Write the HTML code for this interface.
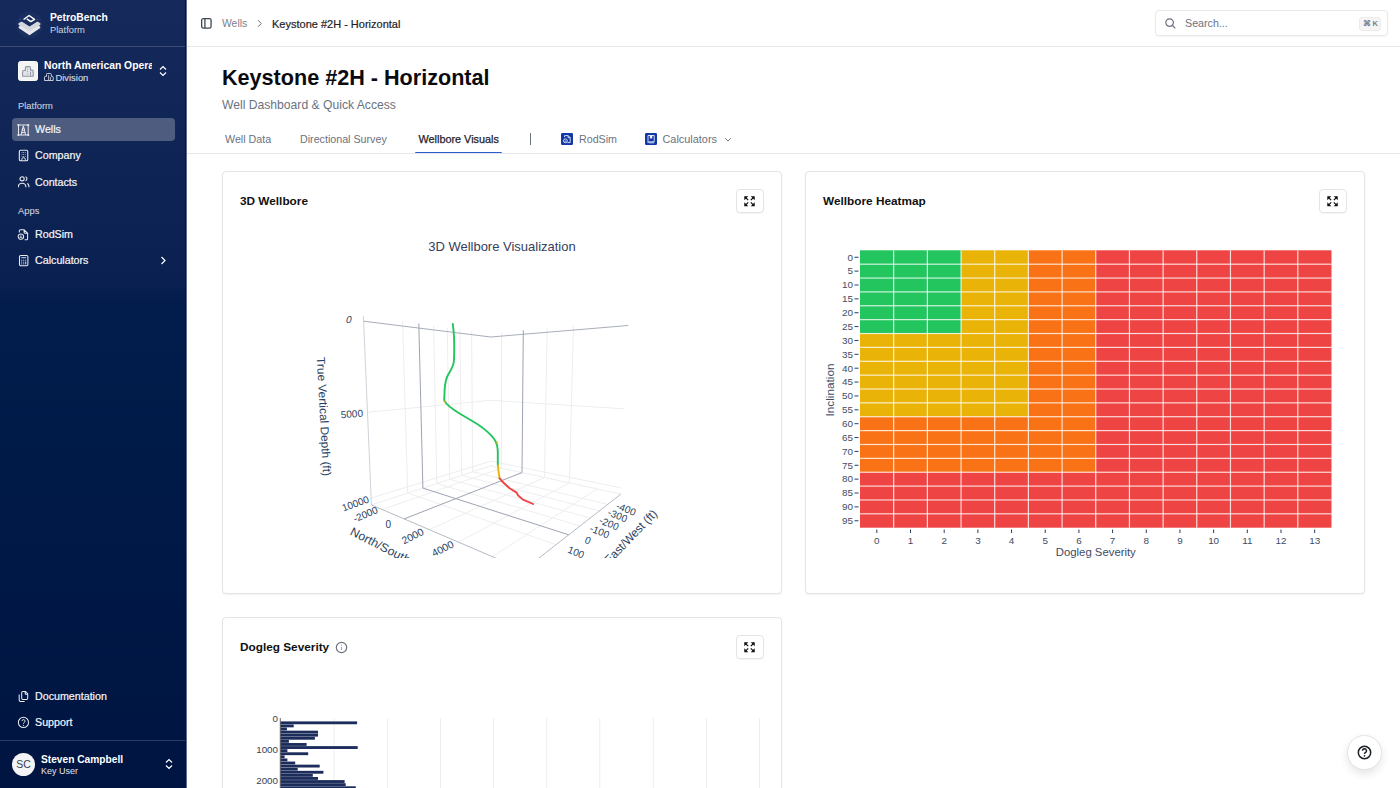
<!DOCTYPE html>
<html><head><meta charset="utf-8">
<style>
*{box-sizing:border-box;margin:0;padding:0}
html,body{width:1400px;height:788px;overflow:hidden;background:#fff;font-family:"Liberation Sans",sans-serif;color:#111827}
.abs{position:absolute}
#sb{position:absolute;left:0;top:0;width:186px;height:788px;box-shadow:1px 0 0 rgba(0,20,70,0.62);z-index:2;background:linear-gradient(180deg,#152a5b 0%,#0a2050 36%,#021c4b 38.5%,#001a48 60%,#001441 100%);border-right:1px solid #001446}
.sbt{position:absolute;color:#fff;white-space:nowrap}
.nav{position:absolute;left:12px;width:163px;height:23px;border-radius:4px}
.nav .t{position:absolute;left:23px;top:5px;font-size:10.7px;color:#f5f6f8;white-space:nowrap;-webkit-text-stroke:0.2px #f5f6f8}
.nav svg{position:absolute;left:6px;top:5px}
.lbl{position:absolute;left:18px;font-size:9.4px;color:#c9ced9;-webkit-text-stroke:0.1px #c9ced9}
#hdr{position:absolute;left:187px;top:0;width:1213px;height:47px;border-bottom:1px solid #e5e7eb}
.card{position:absolute;border:1px solid #e4e4e6;border-radius:4px;background:#fff;box-shadow:0 1px 2px rgba(0,0,0,0.06)}
.ctitle{position:absolute;left:17px;top:22px;font-size:11.8px;font-weight:bold;color:#111;white-space:nowrap}
.xbtn{position:absolute;width:28px;height:24px;border:1px solid #e4e4e6;border-radius:4px;background:#fff;box-shadow:0 1px 1px rgba(0,0,0,0.04)}
.xbtn svg{position:absolute;left:7.5px;top:5.5px}
.tab{position:absolute;top:133px;font-size:10.7px;color:#6b7280;white-space:nowrap}
svg text{font-family:"Liberation Sans",sans-serif}
</style></head>
<body>
<div id="sb">
  <svg class="abs" style="left:10px;top:5px" width="40" height="35" viewBox="10 5 40 35">
    <circle cx="29.6" cy="24.6" r="13.3" fill="#1a2f60"/>
    <path d="M18.67 23.22 L21.78 21.67 L29.56 26.78 L37.33 21.67 L40.22 23.22 L40.22 24.78 L38.89 25.67 L40.22 26.78 L40.22 28.11 L29.56 35.22 L18.67 28.11 L18.67 26.78 L20.13 25.67 L18.67 24.78 Z" fill="#e6e8ec"/>
    <path d="M18.67 23.22 L21.78 21.67 L29.56 26.78 L37.33 21.67 L40.22 23.22 L40.22 24.78 L29.56 31.2 L18.67 24.78 Z" fill="#d3d6dd"/>
    <path d="M23.6 19.5 L29.1 15.5 L34.5 19.3 L30.9 21.6 L26.8 18.9" fill="none" stroke="#fff" stroke-width="1.5" stroke-linejoin="round"/>
    <circle cx="20.4" cy="19.4" r="0.6" fill="#2b4fc9"/><circle cx="37.6" cy="19.4" r="0.6" fill="#2b4fc9"/>
  </svg>
  <div class="sbt" style="left:50px;top:12px;font-size:10.3px;font-weight:bold">PetroBench</div>
  <div class="sbt" style="left:50px;top:24px;font-size:9.4px;color:#d1d5de">Platform</div>
  <div class="abs" style="left:0;top:46px;width:185px;height:1px;background:#3b4b73"></div>
  <div class="abs" style="left:17.6px;top:60.8px;width:20.5px;height:20.5px;border-radius:2.5px;background:#f4f4f5;border:1px solid #fdfdfd"></div>
  <svg class="abs" style="left:22px;top:65.5px" width="12" height="11" viewBox="0 0 12 11"><path d="M0.6 10.2V5.6c0-.7.4-1.1 1.1-1.1h1.7V1.7c0-.7.4-1.1 1.1-1.1h2.9c.7 0 1.1.4 1.1 1.1v2.4h1.6c.7 0 1.1.4 1.1 1.1v5z" fill="#e2e4e8" stroke="#8f96a3" stroke-width="1.1" stroke-linejoin="round"/><path d="M5.6 2.7v1 M5.6 5v1 M5.6 7.3v1 M8.5 5.8v4" stroke="#8f96a3" stroke-width="0.9"/></svg>
  <div class="sbt" style="left:44px;top:59.5px;width:108px;overflow:hidden;font-size:10.35px;font-weight:bold">North American Operations</div>
  <svg class="abs" style="left:43.8px;top:73.2px" width="10" height="8" viewBox="0 0 10 8"><path d="M0.5 7.5V4.2c0-.5.3-.8.8-.8h1.2V1.3c0-.5.3-.8.8-.8h3.2c.5 0 .8.3.8.8v2.1h1.1c.5 0 .8.3.8.8v3.3z" fill="none" stroke="#d8dbe2" stroke-width="0.9"/><path d="M4.6 2.2v4.8 M6.4 4v3" stroke="#d8dbe2" stroke-width="0.8"/></svg>
  <div class="sbt" style="left:55.5px;top:71.5px;font-size:9.4px;color:#d5d9e0;-webkit-text-stroke:0.15px #d5d9e0">Division</div>
  <svg class="abs" style="left:158px;top:65px" width="10" height="12" viewBox="0 0 10 12"><path d="M2 4.5 L5 1.5 L8 4.5 M2 7.5 L5 10.5 L8 7.5" fill="none" stroke="#fff" stroke-width="1.2"/></svg>

  <div class="lbl" style="top:100px">Platform</div>
  <div class="nav" style="top:118px;background:#4d5c7f">
    <svg style="left:5px;top:5.5px" width="13" height="12" viewBox="0 0 13 12"><path d="M0.4 1H12.3 M0.4 11H12.3 M1.5 1V11 M11.2 1V11 M6.35 1.8 L4 11 M6.35 1.8 L8.7 11 M4.6 8.6H8.1" fill="none" stroke="#e8eaee" stroke-width="1"/><circle cx="6.35" cy="5.6" r="1.1" fill="none" stroke="#e8eaee" stroke-width="0.9"/><circle cx="1.5" cy="1" r="0.9" fill="#e8eaee"/><circle cx="11.2" cy="1" r="0.9" fill="#e8eaee"/><circle cx="1.5" cy="11" r="0.9" fill="#e8eaee"/><circle cx="11.2" cy="11" r="0.9" fill="#e8eaee"/></svg>
    <div class="t">Wells</div>
  </div>
  <div class="nav" style="top:144px">
    <svg width="13" height="14" viewBox="0 0 13 14"><rect x="1.35" y="1.3" width="8.4" height="10.4" rx="1.3" fill="none" stroke="#e8eaee" stroke-width="1.1"/><path d="M3.6 3.5h.8 M5.2 3.5h.8 M6.8 3.5h.8 M3.6 5.5h.8 M5.2 5.5h.8 M6.8 5.5h.8 M3.6 7.5h.8 M5.2 7.5h.8 M6.8 7.5h.8" stroke="#c9cdd6" stroke-width="0.9"/><path d="M3.8 11.6v-1.2a1.75 1.75 0 0 1 3.5 0v1.2" fill="none" stroke="#e8eaee" stroke-width="1"/></svg>
    <div class="t">Company</div>
  </div>
  <div class="nav" style="top:171px">
    <svg width="13" height="12" viewBox="0 0 13 12"><circle cx="4.1" cy="2.8" r="2.1" fill="none" stroke="#e8eaee" stroke-width="1.1"/><path d="M0.3 11.2c0-2.6 1.7-4 3.8-4s3.8 1.4 3.8 4 M7.5 0.8a2.1 2.1 0 0 1 0 4 M9.2 7.4c1.4.5 1.8 2 1.8 3.8" fill="none" stroke="#e8eaee" stroke-width="1.1"/></svg>
    <div class="t">Contacts</div>
  </div>
  <div class="lbl" style="top:205px">Apps</div>
  <div class="nav" style="top:223px">
    <svg style="left:5px;top:5px" width="13" height="13" viewBox="0 0 13 13"><path d="M2.3 4.6V2.9c0-.6.5-1.1 1.1-1.1h3.7l3.5 3.5v5.4c0 .6-.5 1.1-1.1 1.1H7.6 M7.1 1.8v2.5c0 .5.4.9.9.9h2.6" fill="none" stroke="#e8eaee" stroke-width="1.05"/><circle cx="3.9" cy="8.6" r="2.7" fill="none" stroke="#e8eaee" stroke-width="1.05"/><path d="M2.6 9.3h2.6 M3.9 7.3v2" stroke="#e8eaee" stroke-width="0.9"/></svg>
    <div class="t">RodSim</div>
  </div>
  <div class="nav" style="top:249px">
    <svg style="left:5px;top:5px" width="13" height="13" viewBox="0 0 13 13"><rect x="2.5" y="1.5" width="8.4" height="10.3" rx="1.3" fill="none" stroke="#e8eaee" stroke-width="1.05"/><path d="M4.3 3.7h4.8" stroke="#e8eaee" stroke-width="0.9"/><g fill="#dfe2e8"><rect x="4.2" y="5.7" width="1" height="1"/><rect x="6.2" y="5.7" width="1" height="1"/><rect x="8.2" y="5.7" width="1" height="1"/><rect x="4.2" y="7.6" width="1" height="1"/><rect x="6.2" y="7.6" width="1" height="1"/><rect x="4.2" y="9.4" width="1" height="1"/><rect x="6.2" y="9.4" width="1" height="1"/><rect x="8.2" y="7.6" width="1" height="2.8"/></g></svg>
    <div class="t">Calculators</div>
    <svg style="left:148px;top:7px" width="7" height="9" viewBox="0 0 7 9"><path d="M1.5 1 L5 4.5 L1.5 8" fill="none" stroke="#fff" stroke-width="1.2"/></svg>
  </div>

  <div class="nav" style="top:685px">
    <svg style="left:5px;top:5px" width="13" height="13" viewBox="0 0 13 13"><path d="M2.2 4.4v5.6c0 .8.6 1.4 1.4 1.4h4" fill="none" stroke="#e8eaee" stroke-width="1.05"/><path d="M5.9 1.5h2.6l2.2 2.2v4.5c0 .7-.5 1.2-1.2 1.2H5.9c-.7 0-1.2-.5-1.2-1.2V2.7c0-.7.5-1.2 1.2-1.2z M8.2 1.6v2.1c0 .3.2.5.5.5h2" fill="none" stroke="#e8eaee" stroke-width="1.05"/></svg>
    <div class="t">Documentation</div>
  </div>
  <div class="nav" style="top:711px">
    <svg style="left:5px;top:5px" width="13" height="13" viewBox="0 0 13 13"><circle cx="6.45" cy="6.4" r="5.1" fill="none" stroke="#e8eaee" stroke-width="1.05"/><path d="M5 5.1a1.5 1.5 0 1 1 2.1 1.4c-.4.2-.6.5-.6 1v.3" fill="none" stroke="#e8eaee" stroke-width="1"/><circle cx="6.5" cy="9.3" r=".6" fill="#e8eaee"/></svg>
    <div class="t">Support</div>
  </div>
  <div class="abs" style="left:0;top:740px;width:185px;height:1px;background:#2d3d67"></div>
  <div class="abs" style="left:12px;top:752.5px;width:23.3px;height:23.3px;border-radius:50%;background:#f3f4f6;color:#374151;font-size:10.5px;line-height:23px;text-align:center">SC</div>
  <div class="sbt" style="left:41px;top:753.5px;font-size:10.2px;font-weight:bold">Steven Campbell</div>
  <div class="sbt" style="left:41px;top:765.8px;font-size:9px;color:#e5e7eb">Key User</div>
  <svg class="abs" style="left:164px;top:758px" width="10" height="12" viewBox="0 0 10 12"><path d="M2 4.5 L5 1.5 L8 4.5 M2 7.5 L5 10.5 L8 7.5" fill="none" stroke="#fff" stroke-width="1.2"/></svg>
</div>

<div id="hdr">
  <svg class="abs" style="left:13.5px;top:18px" width="11" height="11" viewBox="0 0 11 11"><rect x="0.65" y="0.65" width="9.4" height="9.4" rx="1.6" fill="none" stroke="#3f4652" stroke-width="1.3"/><path d="M3.9 0.8v9.2" stroke="#3f4652" stroke-width="1.3"/></svg>
  <div class="abs" style="left:35px;top:18px;font-size:10.4px;color:#7c818b">Wells</div>
  <svg class="abs" style="left:70px;top:19px" width="6" height="9" viewBox="0 0 6 9"><path d="M1 1.2 L4.3 4.5 L1 7.8" fill="none" stroke="#6b7280" stroke-width="1"/></svg>
  <div class="abs" style="left:85px;top:17.5px;font-size:11px;color:#1f2229;-webkit-text-stroke:0.2px #1f2229">Keystone #2H - Horizontal</div>
  <div class="abs" style="left:968px;top:10.2px;width:232.5px;height:26.3px;border:1px solid #e8e9eb;border-radius:4px;background:#fff;box-shadow:0 1px 1px rgba(0,0,0,0.04)"></div>
  <svg class="abs" style="left:978px;top:18px" width="11" height="11" viewBox="0 0 11 11"><circle cx="4.6" cy="4.6" r="3.8" fill="none" stroke="#6b7280" stroke-width="1.2"/><path d="M7.5 7.5 L10.3 10.3" stroke="#6b7280" stroke-width="1.2"/></svg>
  <div class="abs" style="left:998px;top:17px;font-size:10.7px;color:#6b7280">Search...</div>
  <div class="abs" style="left:1172.3px;top:17.3px;width:22px;height:14px;border-radius:3px;background:#f5f5f6;border:1px solid #ececed;font-size:7.6px;font-weight:bold;color:#7a808b;line-height:12.5px;text-align:center">&#8984; K</div>
</div>

<div class="abs" style="left:222px;top:65px;font-size:21.6px;font-weight:bold;color:#0b0b0f;white-space:nowrap">Keystone #2H - Horizontal</div>
<div class="abs" style="left:222px;top:98px;font-size:12.15px;color:#6b7280;white-space:nowrap">Well Dashboard &amp; Quick Access</div>

<div class="tab" style="left:225px">Well Data</div>
<div class="tab" style="left:300px">Directional Survey</div>
<div class="tab" style="left:418.5px;font-size:10.85px;color:#1f2229;-webkit-text-stroke:0.25px #1f2229">Wellbore Visuals</div>
<div class="abs" style="left:415.3px;top:151.6px;width:87.2px;height:2px;border-radius:1px;background:#2f5bce"></div>
<div class="abs" style="left:530px;top:132.5px;width:1px;height:12.5px;background:#6b7280"></div>
<svg class="abs" style="left:561px;top:133.2px" width="12" height="12" viewBox="0 0 12 12"><rect width="12" height="12" rx="1.2" fill="#1238a8"/><path d="M3.6 4.2V2.6h3.6l2 2v5H6.4 M7.1 2.7v2h2" fill="none" stroke="#fff" stroke-width="0.8"/><circle cx="4.4" cy="7.8" r="1.9" fill="none" stroke="#fff" stroke-width="0.8"/><path d="M3.5 8.2h1.8" stroke="#fff" stroke-width="0.7"/></svg>
<div class="tab" style="left:579px">RodSim</div>
<svg class="abs" style="left:645px;top:133.2px" width="12" height="12" viewBox="0 0 12 12"><rect width="12" height="12" rx="1.2" fill="#1238a8"/><path d="M3 9.6V2.5h6.2v6.3H3.8 M3 9.6c0-.5.3-.8.8-.8 M3.8 9.8h5.4" fill="none" stroke="#fff" stroke-width="0.8"/><path d="M5.2 2.6v2.8l.9-.7.9.7V2.6" fill="#fff" stroke="#fff" stroke-width="0.5"/></svg>
<div class="tab" style="left:662.5px;font-size:10.9px">Calculators</div>
<svg class="abs" style="left:724px;top:136.5px" width="8" height="6" viewBox="0 0 8 6"><path d="M1.2 1.2 L4 4 L6.8 1.2" fill="none" stroke="#6b7280" stroke-width="1"/></svg>
<div class="abs" style="left:187px;top:153px;width:1213px;height:1px;background:#e5e7eb"></div>

<div class="card" style="left:222px;top:171px;width:560px;height:423px">
  <div class="ctitle">3D Wellbore</div>
  <div class="xbtn" style="left:512.5px;top:17px"><svg width="11" height="11" viewBox="0 0 11 11"><path d="M0.3 0.3h4L0.3 4.3Z M10.7 0.3h-4L10.7 4.3Z M0.3 10.3h4L0.3 6.3Z M10.7 10.3h-4L10.7 6.3Z" fill="#111"/><path d="M1 1l3.2 3.2 M10 1L6.8 4.2 M1 9.6l3.2-3.2 M10 9.6L6.8 6.4" stroke="#111" stroke-width="1.2"/></svg></div>
</div>
<div class="card" style="left:805px;top:171px;width:560px;height:423px">
  <div class="ctitle">Wellbore Heatmap</div>
  <div class="xbtn" style="left:512.5px;top:17px"><svg width="11" height="11" viewBox="0 0 11 11"><path d="M0.3 0.3h4L0.3 4.3Z M10.7 0.3h-4L10.7 4.3Z M0.3 10.3h4L0.3 6.3Z M10.7 10.3h-4L10.7 6.3Z" fill="#111"/><path d="M1 1l3.2 3.2 M10 1L6.8 4.2 M1 9.6l3.2-3.2 M10 9.6L6.8 6.4" stroke="#111" stroke-width="1.2"/></svg></div>
</div>
<div class="card" style="left:222px;top:617px;width:560px;height:300px">
  <div class="ctitle">Dogleg Severity</div>
  <svg class="abs" style="left:111.5px;top:22.7px" width="13" height="13" viewBox="0 0 13 13"><circle cx="6.5" cy="6.5" r="5.2" fill="none" stroke="#6b7280" stroke-width="1.2"/><path d="M6.5 6v3" stroke="#9ca3af" stroke-width="1"/><circle cx="6.5" cy="4.2" r="0.6" fill="#9ca3af"/></svg>
  <div class="xbtn" style="left:512.5px;top:17px"><svg width="11" height="11" viewBox="0 0 11 11"><path d="M0.3 0.3h4L0.3 4.3Z M10.7 0.3h-4L10.7 4.3Z M0.3 10.3h4L0.3 6.3Z M10.7 10.3h-4L10.7 6.3Z" fill="#111"/><path d="M1 1l3.2 3.2 M10 1L6.8 4.2 M1 9.6l3.2-3.2 M10 9.6L6.8 6.4" stroke="#111" stroke-width="1.2"/></svg></div>
</div>

<!-- charts overlay -->
<svg class="abs" style="left:0;top:0" width="1400" height="788" viewBox="0 0 1400 788">
  <!-- 3D -->
  <text x="428.2" y="250.6" font-size="12.9" textLength="147.5" lengthAdjust="spacingAndGlyphs" fill="#34405c">3D Wellbore Visualization</text>
  <g clip-path="url(#clip3d)">
  <g stroke="#eeeef0" stroke-width="1" fill="none"><path d="M402.6 321.3L407.7 493.0M433.6 325.5L436.8 483.5M447.3 327.4L449.7 479.3M459.9 329.1L461.6 475.4M471.6 330.7L472.7 471.8M367.5 412.3L490.8 400.3M371.1 498.1L490.9 461.1M501.7 332.3L501.4 468.2M547.1 328.1L544.5 477.5M573.5 325.7L569.4 482.9M490.8 400.3L624.5 408.9M490.9 461.1L621.1 487.9M382.3 509.5L501.4 468.2M429.3 529.6L544.5 477.5M458.4 542.1L569.4 482.9M492.5 556.7L597.1 488.9M407.7 493.0L556.0 544.7M436.8 483.5L580.0 525.9M449.7 479.3L590.2 518.0M461.6 475.4L599.4 510.9M472.7 471.8L607.7 504.4M371.4 504.9L490.9 465.9M490.9 465.9L620.9 494.1"/></g>
  <g stroke="#d0d3da" stroke-width="1" fill="none"><path d="M363.4 315.9L371.4 504.9"/></g>
  <g stroke="#b5bac5" stroke-width="1" fill="none"><path d="M371.4 504.9L523.6 570.0M523.6 570.0L620.9 494.1"/></g>
  <g stroke="#a7adb9" stroke-width="1" fill="none"><path d="M363.6 321.2L490.7 337.0L628.2 325.5"/></g>
  <g stroke="#9da3b2" stroke-width="1" fill="none"><path d="M418.8 323.5L422.9 488.1L568.7 534.8M523.3 330.3L522.0 472.6L404.2 518.9"/></g>
  <g fill="none" stroke-width="1.9" stroke-linecap="round" stroke-linejoin="round">
    <path stroke="#22c55e" d="M452.8 324 C454 332, 454.6 345, 454 360 C453.8 366, 451 370, 448.5 374 C446 378, 445 384, 444.6 390 L444.2 400.4 C446 404, 452 409, 460 413.7 L477.6 424.3 C486 430, 492 436, 494.3 439.2 C497 443, 497.8 446, 497.8 452 L497.8 465.4"/>
    <path stroke="#eab308" d="M497.8 465.4 L498.6 472 L499.6 478.3"/>
    <path stroke="#ef4444" d="M499.6 478.3 L503.3 482.5 L509.6 488.2 L516.6 492.6 L517.9 495.2 L523 499.6 L533.1 504"/>
    <circle cx="444.6" cy="401.6" r="0.9" fill="#eab308" stroke="none"/>
    <circle cx="497" cy="442.5" r="0.9" fill="#eab308" stroke="none"/>
  </g>
  <g fill="#2a3f5f" font-size="10">
    <text transform="translate(345.5 322.8) skewX(-12)">0</text>
    <text transform="translate(341 418.2) rotate(-4)">5000</text>
    <text transform="translate(343.5 511.5) rotate(-20)">10000</text>
    <text transform="translate(355 522.5) rotate(-23)">-2000</text>
    <text transform="translate(385.5 527.5)">0</text>
    <text transform="translate(404 544.5) rotate(-27)" font-size="10.4">2000</text>
    <text transform="translate(434 557) rotate(-27)" font-size="10.4">4000</text>
    <text transform="translate(567 552.3) rotate(22)">100</text>
    <text transform="translate(584 542.5) rotate(22)">0</text>
    <text transform="translate(589 531) rotate(22)">-100</text>
    <text transform="translate(598.5 523) rotate(22)">-200</text>
    <text transform="translate(607 515) rotate(22)">-300</text>
    <text transform="translate(615.5 508.5) rotate(22)">-400</text>
    <text font-size="11.6" textLength="119" lengthAdjust="spacingAndGlyphs" transform="translate(316.8 357.3) rotate(87)">True Vertical Depth (ft)</text>
    <text font-size="12" textLength="84" lengthAdjust="spacingAndGlyphs" transform="translate(349.3 534.3) rotate(27)">North/South (ft)</text>
    <text font-size="12" textLength="70" lengthAdjust="spacingAndGlyphs" transform="translate(609.3 564.8) rotate(-46)">East/West (ft)</text>
  </g>
  </g>
  <clipPath id="clip3d"><rect x="223" y="220" width="558" height="338"/></clipPath>

  <!-- heatmap -->
  <g font-size="9.9" fill="#3f4b63">
<rect x="860.00" y="250.30" width="33.68" height="13.87" fill="#22c55e"/>
<rect x="860.00" y="264.17" width="33.68" height="13.87" fill="#22c55e"/>
<rect x="860.00" y="278.04" width="33.68" height="13.87" fill="#22c55e"/>
<rect x="860.00" y="291.91" width="33.68" height="13.87" fill="#22c55e"/>
<rect x="860.00" y="305.78" width="33.68" height="13.87" fill="#22c55e"/>
<rect x="860.00" y="319.65" width="33.68" height="13.87" fill="#22c55e"/>
<rect x="860.00" y="333.52" width="33.68" height="13.87" fill="#eab308"/>
<rect x="860.00" y="347.39" width="33.68" height="13.87" fill="#eab308"/>
<rect x="860.00" y="361.26" width="33.68" height="13.87" fill="#eab308"/>
<rect x="860.00" y="375.13" width="33.68" height="13.87" fill="#eab308"/>
<rect x="860.00" y="389.00" width="33.68" height="13.87" fill="#eab308"/>
<rect x="860.00" y="402.87" width="33.68" height="13.87" fill="#eab308"/>
<rect x="860.00" y="416.74" width="33.68" height="13.87" fill="#f97316"/>
<rect x="860.00" y="430.61" width="33.68" height="13.87" fill="#f97316"/>
<rect x="860.00" y="444.48" width="33.68" height="13.87" fill="#f97316"/>
<rect x="860.00" y="458.35" width="33.68" height="13.87" fill="#f97316"/>
<rect x="860.00" y="472.22" width="33.68" height="13.87" fill="#ef4444"/>
<rect x="860.00" y="486.09" width="33.68" height="13.87" fill="#ef4444"/>
<rect x="860.00" y="499.96" width="33.68" height="13.87" fill="#ef4444"/>
<rect x="860.00" y="513.83" width="33.68" height="13.87" fill="#ef4444"/>
<rect x="893.68" y="250.30" width="33.68" height="13.87" fill="#22c55e"/>
<rect x="893.68" y="264.17" width="33.68" height="13.87" fill="#22c55e"/>
<rect x="893.68" y="278.04" width="33.68" height="13.87" fill="#22c55e"/>
<rect x="893.68" y="291.91" width="33.68" height="13.87" fill="#22c55e"/>
<rect x="893.68" y="305.78" width="33.68" height="13.87" fill="#22c55e"/>
<rect x="893.68" y="319.65" width="33.68" height="13.87" fill="#22c55e"/>
<rect x="893.68" y="333.52" width="33.68" height="13.87" fill="#eab308"/>
<rect x="893.68" y="347.39" width="33.68" height="13.87" fill="#eab308"/>
<rect x="893.68" y="361.26" width="33.68" height="13.87" fill="#eab308"/>
<rect x="893.68" y="375.13" width="33.68" height="13.87" fill="#eab308"/>
<rect x="893.68" y="389.00" width="33.68" height="13.87" fill="#eab308"/>
<rect x="893.68" y="402.87" width="33.68" height="13.87" fill="#eab308"/>
<rect x="893.68" y="416.74" width="33.68" height="13.87" fill="#f97316"/>
<rect x="893.68" y="430.61" width="33.68" height="13.87" fill="#f97316"/>
<rect x="893.68" y="444.48" width="33.68" height="13.87" fill="#f97316"/>
<rect x="893.68" y="458.35" width="33.68" height="13.87" fill="#f97316"/>
<rect x="893.68" y="472.22" width="33.68" height="13.87" fill="#ef4444"/>
<rect x="893.68" y="486.09" width="33.68" height="13.87" fill="#ef4444"/>
<rect x="893.68" y="499.96" width="33.68" height="13.87" fill="#ef4444"/>
<rect x="893.68" y="513.83" width="33.68" height="13.87" fill="#ef4444"/>
<rect x="927.36" y="250.30" width="33.68" height="13.87" fill="#22c55e"/>
<rect x="927.36" y="264.17" width="33.68" height="13.87" fill="#22c55e"/>
<rect x="927.36" y="278.04" width="33.68" height="13.87" fill="#22c55e"/>
<rect x="927.36" y="291.91" width="33.68" height="13.87" fill="#22c55e"/>
<rect x="927.36" y="305.78" width="33.68" height="13.87" fill="#22c55e"/>
<rect x="927.36" y="319.65" width="33.68" height="13.87" fill="#22c55e"/>
<rect x="927.36" y="333.52" width="33.68" height="13.87" fill="#eab308"/>
<rect x="927.36" y="347.39" width="33.68" height="13.87" fill="#eab308"/>
<rect x="927.36" y="361.26" width="33.68" height="13.87" fill="#eab308"/>
<rect x="927.36" y="375.13" width="33.68" height="13.87" fill="#eab308"/>
<rect x="927.36" y="389.00" width="33.68" height="13.87" fill="#eab308"/>
<rect x="927.36" y="402.87" width="33.68" height="13.87" fill="#eab308"/>
<rect x="927.36" y="416.74" width="33.68" height="13.87" fill="#f97316"/>
<rect x="927.36" y="430.61" width="33.68" height="13.87" fill="#f97316"/>
<rect x="927.36" y="444.48" width="33.68" height="13.87" fill="#f97316"/>
<rect x="927.36" y="458.35" width="33.68" height="13.87" fill="#f97316"/>
<rect x="927.36" y="472.22" width="33.68" height="13.87" fill="#ef4444"/>
<rect x="927.36" y="486.09" width="33.68" height="13.87" fill="#ef4444"/>
<rect x="927.36" y="499.96" width="33.68" height="13.87" fill="#ef4444"/>
<rect x="927.36" y="513.83" width="33.68" height="13.87" fill="#ef4444"/>
<rect x="961.04" y="250.30" width="33.68" height="13.87" fill="#eab308"/>
<rect x="961.04" y="264.17" width="33.68" height="13.87" fill="#eab308"/>
<rect x="961.04" y="278.04" width="33.68" height="13.87" fill="#eab308"/>
<rect x="961.04" y="291.91" width="33.68" height="13.87" fill="#eab308"/>
<rect x="961.04" y="305.78" width="33.68" height="13.87" fill="#eab308"/>
<rect x="961.04" y="319.65" width="33.68" height="13.87" fill="#eab308"/>
<rect x="961.04" y="333.52" width="33.68" height="13.87" fill="#eab308"/>
<rect x="961.04" y="347.39" width="33.68" height="13.87" fill="#eab308"/>
<rect x="961.04" y="361.26" width="33.68" height="13.87" fill="#eab308"/>
<rect x="961.04" y="375.13" width="33.68" height="13.87" fill="#eab308"/>
<rect x="961.04" y="389.00" width="33.68" height="13.87" fill="#eab308"/>
<rect x="961.04" y="402.87" width="33.68" height="13.87" fill="#eab308"/>
<rect x="961.04" y="416.74" width="33.68" height="13.87" fill="#f97316"/>
<rect x="961.04" y="430.61" width="33.68" height="13.87" fill="#f97316"/>
<rect x="961.04" y="444.48" width="33.68" height="13.87" fill="#f97316"/>
<rect x="961.04" y="458.35" width="33.68" height="13.87" fill="#f97316"/>
<rect x="961.04" y="472.22" width="33.68" height="13.87" fill="#ef4444"/>
<rect x="961.04" y="486.09" width="33.68" height="13.87" fill="#ef4444"/>
<rect x="961.04" y="499.96" width="33.68" height="13.87" fill="#ef4444"/>
<rect x="961.04" y="513.83" width="33.68" height="13.87" fill="#ef4444"/>
<rect x="994.71" y="250.30" width="33.68" height="13.87" fill="#eab308"/>
<rect x="994.71" y="264.17" width="33.68" height="13.87" fill="#eab308"/>
<rect x="994.71" y="278.04" width="33.68" height="13.87" fill="#eab308"/>
<rect x="994.71" y="291.91" width="33.68" height="13.87" fill="#eab308"/>
<rect x="994.71" y="305.78" width="33.68" height="13.87" fill="#eab308"/>
<rect x="994.71" y="319.65" width="33.68" height="13.87" fill="#eab308"/>
<rect x="994.71" y="333.52" width="33.68" height="13.87" fill="#eab308"/>
<rect x="994.71" y="347.39" width="33.68" height="13.87" fill="#eab308"/>
<rect x="994.71" y="361.26" width="33.68" height="13.87" fill="#eab308"/>
<rect x="994.71" y="375.13" width="33.68" height="13.87" fill="#eab308"/>
<rect x="994.71" y="389.00" width="33.68" height="13.87" fill="#eab308"/>
<rect x="994.71" y="402.87" width="33.68" height="13.87" fill="#eab308"/>
<rect x="994.71" y="416.74" width="33.68" height="13.87" fill="#f97316"/>
<rect x="994.71" y="430.61" width="33.68" height="13.87" fill="#f97316"/>
<rect x="994.71" y="444.48" width="33.68" height="13.87" fill="#f97316"/>
<rect x="994.71" y="458.35" width="33.68" height="13.87" fill="#f97316"/>
<rect x="994.71" y="472.22" width="33.68" height="13.87" fill="#ef4444"/>
<rect x="994.71" y="486.09" width="33.68" height="13.87" fill="#ef4444"/>
<rect x="994.71" y="499.96" width="33.68" height="13.87" fill="#ef4444"/>
<rect x="994.71" y="513.83" width="33.68" height="13.87" fill="#ef4444"/>
<rect x="1028.39" y="250.30" width="33.68" height="13.87" fill="#f97316"/>
<rect x="1028.39" y="264.17" width="33.68" height="13.87" fill="#f97316"/>
<rect x="1028.39" y="278.04" width="33.68" height="13.87" fill="#f97316"/>
<rect x="1028.39" y="291.91" width="33.68" height="13.87" fill="#f97316"/>
<rect x="1028.39" y="305.78" width="33.68" height="13.87" fill="#f97316"/>
<rect x="1028.39" y="319.65" width="33.68" height="13.87" fill="#f97316"/>
<rect x="1028.39" y="333.52" width="33.68" height="13.87" fill="#f97316"/>
<rect x="1028.39" y="347.39" width="33.68" height="13.87" fill="#f97316"/>
<rect x="1028.39" y="361.26" width="33.68" height="13.87" fill="#f97316"/>
<rect x="1028.39" y="375.13" width="33.68" height="13.87" fill="#f97316"/>
<rect x="1028.39" y="389.00" width="33.68" height="13.87" fill="#f97316"/>
<rect x="1028.39" y="402.87" width="33.68" height="13.87" fill="#f97316"/>
<rect x="1028.39" y="416.74" width="33.68" height="13.87" fill="#f97316"/>
<rect x="1028.39" y="430.61" width="33.68" height="13.87" fill="#f97316"/>
<rect x="1028.39" y="444.48" width="33.68" height="13.87" fill="#f97316"/>
<rect x="1028.39" y="458.35" width="33.68" height="13.87" fill="#f97316"/>
<rect x="1028.39" y="472.22" width="33.68" height="13.87" fill="#ef4444"/>
<rect x="1028.39" y="486.09" width="33.68" height="13.87" fill="#ef4444"/>
<rect x="1028.39" y="499.96" width="33.68" height="13.87" fill="#ef4444"/>
<rect x="1028.39" y="513.83" width="33.68" height="13.87" fill="#ef4444"/>
<rect x="1062.07" y="250.30" width="33.68" height="13.87" fill="#f97316"/>
<rect x="1062.07" y="264.17" width="33.68" height="13.87" fill="#f97316"/>
<rect x="1062.07" y="278.04" width="33.68" height="13.87" fill="#f97316"/>
<rect x="1062.07" y="291.91" width="33.68" height="13.87" fill="#f97316"/>
<rect x="1062.07" y="305.78" width="33.68" height="13.87" fill="#f97316"/>
<rect x="1062.07" y="319.65" width="33.68" height="13.87" fill="#f97316"/>
<rect x="1062.07" y="333.52" width="33.68" height="13.87" fill="#f97316"/>
<rect x="1062.07" y="347.39" width="33.68" height="13.87" fill="#f97316"/>
<rect x="1062.07" y="361.26" width="33.68" height="13.87" fill="#f97316"/>
<rect x="1062.07" y="375.13" width="33.68" height="13.87" fill="#f97316"/>
<rect x="1062.07" y="389.00" width="33.68" height="13.87" fill="#f97316"/>
<rect x="1062.07" y="402.87" width="33.68" height="13.87" fill="#f97316"/>
<rect x="1062.07" y="416.74" width="33.68" height="13.87" fill="#f97316"/>
<rect x="1062.07" y="430.61" width="33.68" height="13.87" fill="#f97316"/>
<rect x="1062.07" y="444.48" width="33.68" height="13.87" fill="#f97316"/>
<rect x="1062.07" y="458.35" width="33.68" height="13.87" fill="#f97316"/>
<rect x="1062.07" y="472.22" width="33.68" height="13.87" fill="#ef4444"/>
<rect x="1062.07" y="486.09" width="33.68" height="13.87" fill="#ef4444"/>
<rect x="1062.07" y="499.96" width="33.68" height="13.87" fill="#ef4444"/>
<rect x="1062.07" y="513.83" width="33.68" height="13.87" fill="#ef4444"/>
<rect x="1095.75" y="250.30" width="33.68" height="13.87" fill="#ef4444"/>
<rect x="1095.75" y="264.17" width="33.68" height="13.87" fill="#ef4444"/>
<rect x="1095.75" y="278.04" width="33.68" height="13.87" fill="#ef4444"/>
<rect x="1095.75" y="291.91" width="33.68" height="13.87" fill="#ef4444"/>
<rect x="1095.75" y="305.78" width="33.68" height="13.87" fill="#ef4444"/>
<rect x="1095.75" y="319.65" width="33.68" height="13.87" fill="#ef4444"/>
<rect x="1095.75" y="333.52" width="33.68" height="13.87" fill="#ef4444"/>
<rect x="1095.75" y="347.39" width="33.68" height="13.87" fill="#ef4444"/>
<rect x="1095.75" y="361.26" width="33.68" height="13.87" fill="#ef4444"/>
<rect x="1095.75" y="375.13" width="33.68" height="13.87" fill="#ef4444"/>
<rect x="1095.75" y="389.00" width="33.68" height="13.87" fill="#ef4444"/>
<rect x="1095.75" y="402.87" width="33.68" height="13.87" fill="#ef4444"/>
<rect x="1095.75" y="416.74" width="33.68" height="13.87" fill="#ef4444"/>
<rect x="1095.75" y="430.61" width="33.68" height="13.87" fill="#ef4444"/>
<rect x="1095.75" y="444.48" width="33.68" height="13.87" fill="#ef4444"/>
<rect x="1095.75" y="458.35" width="33.68" height="13.87" fill="#ef4444"/>
<rect x="1095.75" y="472.22" width="33.68" height="13.87" fill="#ef4444"/>
<rect x="1095.75" y="486.09" width="33.68" height="13.87" fill="#ef4444"/>
<rect x="1095.75" y="499.96" width="33.68" height="13.87" fill="#ef4444"/>
<rect x="1095.75" y="513.83" width="33.68" height="13.87" fill="#ef4444"/>
<rect x="1129.43" y="250.30" width="33.68" height="13.87" fill="#ef4444"/>
<rect x="1129.43" y="264.17" width="33.68" height="13.87" fill="#ef4444"/>
<rect x="1129.43" y="278.04" width="33.68" height="13.87" fill="#ef4444"/>
<rect x="1129.43" y="291.91" width="33.68" height="13.87" fill="#ef4444"/>
<rect x="1129.43" y="305.78" width="33.68" height="13.87" fill="#ef4444"/>
<rect x="1129.43" y="319.65" width="33.68" height="13.87" fill="#ef4444"/>
<rect x="1129.43" y="333.52" width="33.68" height="13.87" fill="#ef4444"/>
<rect x="1129.43" y="347.39" width="33.68" height="13.87" fill="#ef4444"/>
<rect x="1129.43" y="361.26" width="33.68" height="13.87" fill="#ef4444"/>
<rect x="1129.43" y="375.13" width="33.68" height="13.87" fill="#ef4444"/>
<rect x="1129.43" y="389.00" width="33.68" height="13.87" fill="#ef4444"/>
<rect x="1129.43" y="402.87" width="33.68" height="13.87" fill="#ef4444"/>
<rect x="1129.43" y="416.74" width="33.68" height="13.87" fill="#ef4444"/>
<rect x="1129.43" y="430.61" width="33.68" height="13.87" fill="#ef4444"/>
<rect x="1129.43" y="444.48" width="33.68" height="13.87" fill="#ef4444"/>
<rect x="1129.43" y="458.35" width="33.68" height="13.87" fill="#ef4444"/>
<rect x="1129.43" y="472.22" width="33.68" height="13.87" fill="#ef4444"/>
<rect x="1129.43" y="486.09" width="33.68" height="13.87" fill="#ef4444"/>
<rect x="1129.43" y="499.96" width="33.68" height="13.87" fill="#ef4444"/>
<rect x="1129.43" y="513.83" width="33.68" height="13.87" fill="#ef4444"/>
<rect x="1163.11" y="250.30" width="33.68" height="13.87" fill="#ef4444"/>
<rect x="1163.11" y="264.17" width="33.68" height="13.87" fill="#ef4444"/>
<rect x="1163.11" y="278.04" width="33.68" height="13.87" fill="#ef4444"/>
<rect x="1163.11" y="291.91" width="33.68" height="13.87" fill="#ef4444"/>
<rect x="1163.11" y="305.78" width="33.68" height="13.87" fill="#ef4444"/>
<rect x="1163.11" y="319.65" width="33.68" height="13.87" fill="#ef4444"/>
<rect x="1163.11" y="333.52" width="33.68" height="13.87" fill="#ef4444"/>
<rect x="1163.11" y="347.39" width="33.68" height="13.87" fill="#ef4444"/>
<rect x="1163.11" y="361.26" width="33.68" height="13.87" fill="#ef4444"/>
<rect x="1163.11" y="375.13" width="33.68" height="13.87" fill="#ef4444"/>
<rect x="1163.11" y="389.00" width="33.68" height="13.87" fill="#ef4444"/>
<rect x="1163.11" y="402.87" width="33.68" height="13.87" fill="#ef4444"/>
<rect x="1163.11" y="416.74" width="33.68" height="13.87" fill="#ef4444"/>
<rect x="1163.11" y="430.61" width="33.68" height="13.87" fill="#ef4444"/>
<rect x="1163.11" y="444.48" width="33.68" height="13.87" fill="#ef4444"/>
<rect x="1163.11" y="458.35" width="33.68" height="13.87" fill="#ef4444"/>
<rect x="1163.11" y="472.22" width="33.68" height="13.87" fill="#ef4444"/>
<rect x="1163.11" y="486.09" width="33.68" height="13.87" fill="#ef4444"/>
<rect x="1163.11" y="499.96" width="33.68" height="13.87" fill="#ef4444"/>
<rect x="1163.11" y="513.83" width="33.68" height="13.87" fill="#ef4444"/>
<rect x="1196.79" y="250.30" width="33.68" height="13.87" fill="#ef4444"/>
<rect x="1196.79" y="264.17" width="33.68" height="13.87" fill="#ef4444"/>
<rect x="1196.79" y="278.04" width="33.68" height="13.87" fill="#ef4444"/>
<rect x="1196.79" y="291.91" width="33.68" height="13.87" fill="#ef4444"/>
<rect x="1196.79" y="305.78" width="33.68" height="13.87" fill="#ef4444"/>
<rect x="1196.79" y="319.65" width="33.68" height="13.87" fill="#ef4444"/>
<rect x="1196.79" y="333.52" width="33.68" height="13.87" fill="#ef4444"/>
<rect x="1196.79" y="347.39" width="33.68" height="13.87" fill="#ef4444"/>
<rect x="1196.79" y="361.26" width="33.68" height="13.87" fill="#ef4444"/>
<rect x="1196.79" y="375.13" width="33.68" height="13.87" fill="#ef4444"/>
<rect x="1196.79" y="389.00" width="33.68" height="13.87" fill="#ef4444"/>
<rect x="1196.79" y="402.87" width="33.68" height="13.87" fill="#ef4444"/>
<rect x="1196.79" y="416.74" width="33.68" height="13.87" fill="#ef4444"/>
<rect x="1196.79" y="430.61" width="33.68" height="13.87" fill="#ef4444"/>
<rect x="1196.79" y="444.48" width="33.68" height="13.87" fill="#ef4444"/>
<rect x="1196.79" y="458.35" width="33.68" height="13.87" fill="#ef4444"/>
<rect x="1196.79" y="472.22" width="33.68" height="13.87" fill="#ef4444"/>
<rect x="1196.79" y="486.09" width="33.68" height="13.87" fill="#ef4444"/>
<rect x="1196.79" y="499.96" width="33.68" height="13.87" fill="#ef4444"/>
<rect x="1196.79" y="513.83" width="33.68" height="13.87" fill="#ef4444"/>
<rect x="1230.46" y="250.30" width="33.68" height="13.87" fill="#ef4444"/>
<rect x="1230.46" y="264.17" width="33.68" height="13.87" fill="#ef4444"/>
<rect x="1230.46" y="278.04" width="33.68" height="13.87" fill="#ef4444"/>
<rect x="1230.46" y="291.91" width="33.68" height="13.87" fill="#ef4444"/>
<rect x="1230.46" y="305.78" width="33.68" height="13.87" fill="#ef4444"/>
<rect x="1230.46" y="319.65" width="33.68" height="13.87" fill="#ef4444"/>
<rect x="1230.46" y="333.52" width="33.68" height="13.87" fill="#ef4444"/>
<rect x="1230.46" y="347.39" width="33.68" height="13.87" fill="#ef4444"/>
<rect x="1230.46" y="361.26" width="33.68" height="13.87" fill="#ef4444"/>
<rect x="1230.46" y="375.13" width="33.68" height="13.87" fill="#ef4444"/>
<rect x="1230.46" y="389.00" width="33.68" height="13.87" fill="#ef4444"/>
<rect x="1230.46" y="402.87" width="33.68" height="13.87" fill="#ef4444"/>
<rect x="1230.46" y="416.74" width="33.68" height="13.87" fill="#ef4444"/>
<rect x="1230.46" y="430.61" width="33.68" height="13.87" fill="#ef4444"/>
<rect x="1230.46" y="444.48" width="33.68" height="13.87" fill="#ef4444"/>
<rect x="1230.46" y="458.35" width="33.68" height="13.87" fill="#ef4444"/>
<rect x="1230.46" y="472.22" width="33.68" height="13.87" fill="#ef4444"/>
<rect x="1230.46" y="486.09" width="33.68" height="13.87" fill="#ef4444"/>
<rect x="1230.46" y="499.96" width="33.68" height="13.87" fill="#ef4444"/>
<rect x="1230.46" y="513.83" width="33.68" height="13.87" fill="#ef4444"/>
<rect x="1264.14" y="250.30" width="33.68" height="13.87" fill="#ef4444"/>
<rect x="1264.14" y="264.17" width="33.68" height="13.87" fill="#ef4444"/>
<rect x="1264.14" y="278.04" width="33.68" height="13.87" fill="#ef4444"/>
<rect x="1264.14" y="291.91" width="33.68" height="13.87" fill="#ef4444"/>
<rect x="1264.14" y="305.78" width="33.68" height="13.87" fill="#ef4444"/>
<rect x="1264.14" y="319.65" width="33.68" height="13.87" fill="#ef4444"/>
<rect x="1264.14" y="333.52" width="33.68" height="13.87" fill="#ef4444"/>
<rect x="1264.14" y="347.39" width="33.68" height="13.87" fill="#ef4444"/>
<rect x="1264.14" y="361.26" width="33.68" height="13.87" fill="#ef4444"/>
<rect x="1264.14" y="375.13" width="33.68" height="13.87" fill="#ef4444"/>
<rect x="1264.14" y="389.00" width="33.68" height="13.87" fill="#ef4444"/>
<rect x="1264.14" y="402.87" width="33.68" height="13.87" fill="#ef4444"/>
<rect x="1264.14" y="416.74" width="33.68" height="13.87" fill="#ef4444"/>
<rect x="1264.14" y="430.61" width="33.68" height="13.87" fill="#ef4444"/>
<rect x="1264.14" y="444.48" width="33.68" height="13.87" fill="#ef4444"/>
<rect x="1264.14" y="458.35" width="33.68" height="13.87" fill="#ef4444"/>
<rect x="1264.14" y="472.22" width="33.68" height="13.87" fill="#ef4444"/>
<rect x="1264.14" y="486.09" width="33.68" height="13.87" fill="#ef4444"/>
<rect x="1264.14" y="499.96" width="33.68" height="13.87" fill="#ef4444"/>
<rect x="1264.14" y="513.83" width="33.68" height="13.87" fill="#ef4444"/>
<rect x="1297.82" y="250.30" width="33.68" height="13.87" fill="#ef4444"/>
<rect x="1297.82" y="264.17" width="33.68" height="13.87" fill="#ef4444"/>
<rect x="1297.82" y="278.04" width="33.68" height="13.87" fill="#ef4444"/>
<rect x="1297.82" y="291.91" width="33.68" height="13.87" fill="#ef4444"/>
<rect x="1297.82" y="305.78" width="33.68" height="13.87" fill="#ef4444"/>
<rect x="1297.82" y="319.65" width="33.68" height="13.87" fill="#ef4444"/>
<rect x="1297.82" y="333.52" width="33.68" height="13.87" fill="#ef4444"/>
<rect x="1297.82" y="347.39" width="33.68" height="13.87" fill="#ef4444"/>
<rect x="1297.82" y="361.26" width="33.68" height="13.87" fill="#ef4444"/>
<rect x="1297.82" y="375.13" width="33.68" height="13.87" fill="#ef4444"/>
<rect x="1297.82" y="389.00" width="33.68" height="13.87" fill="#ef4444"/>
<rect x="1297.82" y="402.87" width="33.68" height="13.87" fill="#ef4444"/>
<rect x="1297.82" y="416.74" width="33.68" height="13.87" fill="#ef4444"/>
<rect x="1297.82" y="430.61" width="33.68" height="13.87" fill="#ef4444"/>
<rect x="1297.82" y="444.48" width="33.68" height="13.87" fill="#ef4444"/>
<rect x="1297.82" y="458.35" width="33.68" height="13.87" fill="#ef4444"/>
<rect x="1297.82" y="472.22" width="33.68" height="13.87" fill="#ef4444"/>
<rect x="1297.82" y="486.09" width="33.68" height="13.87" fill="#ef4444"/>
<rect x="1297.82" y="499.96" width="33.68" height="13.87" fill="#ef4444"/>
<rect x="1297.82" y="513.83" width="33.68" height="13.87" fill="#ef4444"/>
<rect x="893.08" y="250.30" width="1.2" height="277.40" fill="#fff" fill-opacity="0.75"/>
<rect x="926.76" y="250.30" width="1.2" height="277.40" fill="#fff" fill-opacity="0.75"/>
<rect x="960.44" y="250.30" width="1.2" height="277.40" fill="#fff" fill-opacity="0.75"/>
<rect x="994.11" y="250.30" width="1.2" height="277.40" fill="#fff" fill-opacity="0.75"/>
<rect x="1027.79" y="250.30" width="1.2" height="277.40" fill="#fff" fill-opacity="0.75"/>
<rect x="1061.47" y="250.30" width="1.2" height="277.40" fill="#fff" fill-opacity="0.75"/>
<rect x="1095.15" y="250.30" width="1.2" height="277.40" fill="#fff" fill-opacity="0.75"/>
<rect x="1128.83" y="250.30" width="1.2" height="277.40" fill="#fff" fill-opacity="0.75"/>
<rect x="1162.51" y="250.30" width="1.2" height="277.40" fill="#fff" fill-opacity="0.75"/>
<rect x="1196.19" y="250.30" width="1.2" height="277.40" fill="#fff" fill-opacity="0.75"/>
<rect x="1229.86" y="250.30" width="1.2" height="277.40" fill="#fff" fill-opacity="0.75"/>
<rect x="1263.54" y="250.30" width="1.2" height="277.40" fill="#fff" fill-opacity="0.75"/>
<rect x="1297.22" y="250.30" width="1.2" height="277.40" fill="#fff" fill-opacity="0.75"/>
<rect x="860.00" y="263.57" width="471.50" height="1.2" fill="#fff" fill-opacity="0.75"/>
<rect x="860.00" y="277.44" width="471.50" height="1.2" fill="#fff" fill-opacity="0.75"/>
<rect x="860.00" y="291.31" width="471.50" height="1.2" fill="#fff" fill-opacity="0.75"/>
<rect x="860.00" y="305.18" width="471.50" height="1.2" fill="#fff" fill-opacity="0.75"/>
<rect x="860.00" y="319.05" width="471.50" height="1.2" fill="#fff" fill-opacity="0.75"/>
<rect x="860.00" y="332.92" width="471.50" height="1.2" fill="#fff" fill-opacity="0.75"/>
<rect x="860.00" y="346.79" width="471.50" height="1.2" fill="#fff" fill-opacity="0.75"/>
<rect x="860.00" y="360.66" width="471.50" height="1.2" fill="#fff" fill-opacity="0.75"/>
<rect x="860.00" y="374.53" width="471.50" height="1.2" fill="#fff" fill-opacity="0.75"/>
<rect x="860.00" y="388.40" width="471.50" height="1.2" fill="#fff" fill-opacity="0.75"/>
<rect x="860.00" y="402.27" width="471.50" height="1.2" fill="#fff" fill-opacity="0.75"/>
<rect x="860.00" y="416.14" width="471.50" height="1.2" fill="#fff" fill-opacity="0.75"/>
<rect x="860.00" y="430.01" width="471.50" height="1.2" fill="#fff" fill-opacity="0.75"/>
<rect x="860.00" y="443.88" width="471.50" height="1.2" fill="#fff" fill-opacity="0.75"/>
<rect x="860.00" y="457.75" width="471.50" height="1.2" fill="#fff" fill-opacity="0.75"/>
<rect x="860.00" y="471.62" width="471.50" height="1.2" fill="#fff" fill-opacity="0.75"/>
<rect x="860.00" y="485.49" width="471.50" height="1.2" fill="#fff" fill-opacity="0.75"/>
<rect x="860.00" y="499.36" width="471.50" height="1.2" fill="#fff" fill-opacity="0.75"/>
<rect x="860.00" y="513.23" width="471.50" height="1.2" fill="#fff" fill-opacity="0.75"/>
<line x1="854.5" y1="257.24" x2="858.5" y2="257.24" stroke="#2a3f5f" stroke-width="1"/>
<text x="853" y="260.54" text-anchor="end">0</text>
<line x1="854.5" y1="271.11" x2="858.5" y2="271.11" stroke="#2a3f5f" stroke-width="1"/>
<text x="853" y="274.41" text-anchor="end">5</text>
<line x1="854.5" y1="284.98" x2="858.5" y2="284.98" stroke="#2a3f5f" stroke-width="1"/>
<text x="853" y="288.28" text-anchor="end">10</text>
<line x1="854.5" y1="298.85" x2="858.5" y2="298.85" stroke="#2a3f5f" stroke-width="1"/>
<text x="853" y="302.15" text-anchor="end">15</text>
<line x1="854.5" y1="312.72" x2="858.5" y2="312.72" stroke="#2a3f5f" stroke-width="1"/>
<text x="853" y="316.02" text-anchor="end">20</text>
<line x1="854.5" y1="326.59" x2="858.5" y2="326.59" stroke="#2a3f5f" stroke-width="1"/>
<text x="853" y="329.89" text-anchor="end">25</text>
<line x1="854.5" y1="340.46" x2="858.5" y2="340.46" stroke="#2a3f5f" stroke-width="1"/>
<text x="853" y="343.76" text-anchor="end">30</text>
<line x1="854.5" y1="354.32" x2="858.5" y2="354.32" stroke="#2a3f5f" stroke-width="1"/>
<text x="853" y="357.62" text-anchor="end">35</text>
<line x1="854.5" y1="368.19" x2="858.5" y2="368.19" stroke="#2a3f5f" stroke-width="1"/>
<text x="853" y="371.50" text-anchor="end">40</text>
<line x1="854.5" y1="382.06" x2="858.5" y2="382.06" stroke="#2a3f5f" stroke-width="1"/>
<text x="853" y="385.37" text-anchor="end">45</text>
<line x1="854.5" y1="395.94" x2="858.5" y2="395.94" stroke="#2a3f5f" stroke-width="1"/>
<text x="853" y="399.24" text-anchor="end">50</text>
<line x1="854.5" y1="409.81" x2="858.5" y2="409.81" stroke="#2a3f5f" stroke-width="1"/>
<text x="853" y="413.11" text-anchor="end">55</text>
<line x1="854.5" y1="423.68" x2="858.5" y2="423.68" stroke="#2a3f5f" stroke-width="1"/>
<text x="853" y="426.98" text-anchor="end">60</text>
<line x1="854.5" y1="437.54" x2="858.5" y2="437.54" stroke="#2a3f5f" stroke-width="1"/>
<text x="853" y="440.84" text-anchor="end">65</text>
<line x1="854.5" y1="451.41" x2="858.5" y2="451.41" stroke="#2a3f5f" stroke-width="1"/>
<text x="853" y="454.71" text-anchor="end">70</text>
<line x1="854.5" y1="465.28" x2="858.5" y2="465.28" stroke="#2a3f5f" stroke-width="1"/>
<text x="853" y="468.58" text-anchor="end">75</text>
<line x1="854.5" y1="479.15" x2="858.5" y2="479.15" stroke="#2a3f5f" stroke-width="1"/>
<text x="853" y="482.45" text-anchor="end">80</text>
<line x1="854.5" y1="493.02" x2="858.5" y2="493.02" stroke="#2a3f5f" stroke-width="1"/>
<text x="853" y="496.32" text-anchor="end">85</text>
<line x1="854.5" y1="506.89" x2="858.5" y2="506.89" stroke="#2a3f5f" stroke-width="1"/>
<text x="853" y="510.19" text-anchor="end">90</text>
<line x1="854.5" y1="520.76" x2="858.5" y2="520.76" stroke="#2a3f5f" stroke-width="1"/>
<text x="853" y="524.06" text-anchor="end">95</text>
<line x1="876.84" y1="529.5" x2="876.84" y2="533" stroke="#2a3f5f" stroke-width="1"/>
<text x="876.84" y="544.3" text-anchor="middle">0</text>
<line x1="910.52" y1="529.5" x2="910.52" y2="533" stroke="#2a3f5f" stroke-width="1"/>
<text x="910.52" y="544.3" text-anchor="middle">1</text>
<line x1="944.20" y1="529.5" x2="944.20" y2="533" stroke="#2a3f5f" stroke-width="1"/>
<text x="944.20" y="544.3" text-anchor="middle">2</text>
<line x1="977.88" y1="529.5" x2="977.88" y2="533" stroke="#2a3f5f" stroke-width="1"/>
<text x="977.88" y="544.3" text-anchor="middle">3</text>
<line x1="1011.55" y1="529.5" x2="1011.55" y2="533" stroke="#2a3f5f" stroke-width="1"/>
<text x="1011.55" y="544.3" text-anchor="middle">4</text>
<line x1="1045.23" y1="529.5" x2="1045.23" y2="533" stroke="#2a3f5f" stroke-width="1"/>
<text x="1045.23" y="544.3" text-anchor="middle">5</text>
<line x1="1078.91" y1="529.5" x2="1078.91" y2="533" stroke="#2a3f5f" stroke-width="1"/>
<text x="1078.91" y="544.3" text-anchor="middle">6</text>
<line x1="1112.59" y1="529.5" x2="1112.59" y2="533" stroke="#2a3f5f" stroke-width="1"/>
<text x="1112.59" y="544.3" text-anchor="middle">7</text>
<line x1="1146.27" y1="529.5" x2="1146.27" y2="533" stroke="#2a3f5f" stroke-width="1"/>
<text x="1146.27" y="544.3" text-anchor="middle">8</text>
<line x1="1179.95" y1="529.5" x2="1179.95" y2="533" stroke="#2a3f5f" stroke-width="1"/>
<text x="1179.95" y="544.3" text-anchor="middle">9</text>
<line x1="1213.62" y1="529.5" x2="1213.62" y2="533" stroke="#2a3f5f" stroke-width="1"/>
<text x="1213.62" y="544.3" text-anchor="middle">10</text>
<line x1="1247.30" y1="529.5" x2="1247.30" y2="533" stroke="#2a3f5f" stroke-width="1"/>
<text x="1247.30" y="544.3" text-anchor="middle">11</text>
<line x1="1280.98" y1="529.5" x2="1280.98" y2="533" stroke="#2a3f5f" stroke-width="1"/>
<text x="1280.98" y="544.3" text-anchor="middle">12</text>
<line x1="1314.66" y1="529.5" x2="1314.66" y2="533" stroke="#2a3f5f" stroke-width="1"/>
<text x="1314.66" y="544.3" text-anchor="middle">13</text>
  </g>
  <text transform="translate(834 416.5) rotate(-90)" font-size="10.6" textLength="53" lengthAdjust="spacingAndGlyphs" fill="#3f4b63">Inclination</text>
  <text x="1055.8" y="555.9" font-size="10.2" textLength="80" lengthAdjust="spacingAndGlyphs" fill="#3f4b63">Dogleg Severity</text>

  <!-- bars -->
  <g stroke="#ededed" stroke-width="1">
    <path d="M334 718.3V788 M387.4 718.3V788 M440.5 718.3V788 M493.6 718.3V788 M546.7 718.3V788 M599.8 718.3V788 M653.3 718.3V788 M706.4 718.3V788 M759.5 718.3V788"/>
  </g>
<rect x="280.5" y="721.40" width="76.60" height="2.85" fill="#1c2d5c"/>
<rect x="280.5" y="724.49" width="13.20" height="2.85" fill="#1c2d5c"/>
<rect x="280.5" y="727.58" width="6.40" height="2.85" fill="#1c2d5c"/>
<rect x="280.5" y="730.67" width="37.50" height="2.85" fill="#1c2d5c"/>
<rect x="280.5" y="733.76" width="37.50" height="2.85" fill="#1c2d5c"/>
<rect x="280.5" y="736.85" width="34.40" height="2.85" fill="#1c2d5c"/>
<rect x="280.5" y="739.94" width="8.40" height="2.85" fill="#1c2d5c"/>
<rect x="280.5" y="743.03" width="26.10" height="2.85" fill="#1c2d5c"/>
<rect x="280.5" y="746.12" width="77.20" height="2.85" fill="#1c2d5c"/>
<rect x="280.5" y="749.21" width="6.90" height="2.85" fill="#1c2d5c"/>
<rect x="280.5" y="752.30" width="27.70" height="2.85" fill="#1c2d5c"/>
<rect x="280.5" y="755.39" width="4.10" height="2.85" fill="#1c2d5c"/>
<rect x="280.5" y="758.48" width="6.90" height="2.85" fill="#1c2d5c"/>
<rect x="280.5" y="761.57" width="14.70" height="2.85" fill="#1c2d5c"/>
<rect x="280.5" y="764.66" width="39.20" height="2.85" fill="#1c2d5c"/>
<rect x="280.5" y="767.75" width="17.20" height="2.85" fill="#1c2d5c"/>
<rect x="280.5" y="770.84" width="42.90" height="2.85" fill="#1c2d5c"/>
<rect x="280.5" y="773.93" width="32.30" height="2.85" fill="#1c2d5c"/>
<rect x="280.5" y="777.02" width="37.50" height="2.85" fill="#1c2d5c"/>
<rect x="280.5" y="780.11" width="64.10" height="2.85" fill="#1c2d5c"/>
<rect x="280.5" y="783.20" width="65.20" height="2.85" fill="#1c2d5c"/>
<rect x="280.5" y="786.29" width="75.30" height="2.85" fill="#1c2d5c"/>
<rect x="280.5" y="789.38" width="69.50" height="2.85" fill="#1c2d5c"/>
<rect x="280.5" y="792.47" width="59.50" height="2.85" fill="#1c2d5c"/>
  <path d="M280.3 718V788" stroke="#444" stroke-width="0.8"/>
  <g font-size="9.8" fill="#3a4252" text-anchor="end">
    <text x="278" y="722">0</text>
    <text x="278" y="752.8">1000</text>
    <text x="278" y="783.6">2000</text>
  </g>
</svg>

<div class="abs" style="left:1347px;top:735.3px;width:34.6px;height:34.6px;border-radius:50%;background:#fff;border:1px solid #e4e4e7;box-shadow:0 4px 9px rgba(0,0,0,0.10)"></div>
<svg class="abs" style="left:1357px;top:745px" width="15" height="15" viewBox="0 0 15 15"><circle cx="7.5" cy="7.5" r="6.2" fill="none" stroke="#1b1f27" stroke-width="1.5"/><path d="M5.5 5.8a2 2 0 1 1 2.8 1.8c-.6.3-.8.7-.8 1.3" fill="none" stroke="#1b1f27" stroke-width="1.5"/><circle cx="7.5" cy="10.8" r="0.85" fill="#1b1f27"/></svg>
</body></html>
